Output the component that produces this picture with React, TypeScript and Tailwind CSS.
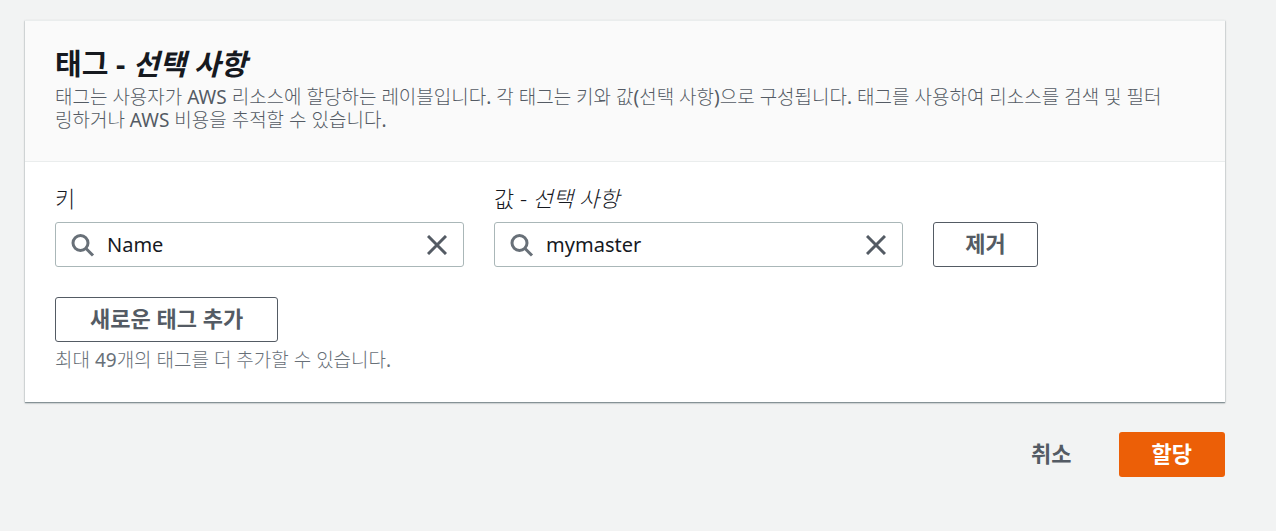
import { FC, useState } from 'react';

type TagFieldProps = {
  id: string;
  label: string;
  hint?: string;
  value: string;
  onChange: (value: string) => void;
};

const TagField: FC<TagFieldProps> = ({ id, label, hint, value, onChange }) => (
  <div className="min-w-0 flex-1">
    <label htmlFor={id} className="mb-2 block text-[22px] leading-8 font-light text-[#16191f]">
      {label}
      {hint && <> - <em>{hint}</em></>}
    </label>
    <div className="flex h-[45px] items-center rounded-[3px] border border-[#aab7b8] bg-white pr-4 pl-[15px]">
      <svg className="h-6 w-6 shrink-0" viewBox="0 0 24 24" fill="none" stroke="#687078" strokeWidth="3" aria-hidden="true">
        <circle cx="9.5" cy="10" r="7.5" />
        <path d="M14.5 15l7.5 7.5" />
      </svg>
      <input
        id={id}
        value={value}
        onChange={(e) => onChange(e.target.value)}
        className="ml-3 min-w-0 flex-1 bg-transparent text-xl text-[#16191f] outline-none"
      />
      <button type="button" onClick={() => onChange('')} aria-label="지우기" className="shrink-0">
        <svg className="h-5 w-5" viewBox="0 0 20 20" fill="none" stroke="#545b64" strokeWidth="3" aria-hidden="true">
          <path d="M1 1l18 18M19 1L1 19" />
        </svg>
      </button>
    </div>
  </div>
);

const App: FC = () => {
  const [tagKey, setTagKey] = useState('Name');
  const [tagValue, setTagValue] = useState('mymaster');

  return (
    <div className="min-h-screen bg-[#f2f3f3] py-5 pr-[51px] pl-[25px] font-['Noto_Sans','Noto_Sans_CJK_KR',sans-serif]">
      <section className="border-t border-[#eaeded] bg-white shadow-[0_1px_1px_rgba(0,28,36,0.3),0_1px_2px_rgba(0,28,36,0.3)]">
        <header className="border-b border-[#eaeded] bg-[#fafafa] px-[30px] pt-[25px] pb-[29px]">
          <h2 className="mb-1 text-[29px] leading-9 font-bold text-[#16191f]">
            태그 - <em>선택 사항</em>
          </h2>
          <p className="pr-5 font-['Noto_Sans','Noto_Sans_CJK_KR_Light','Noto_Sans_CJK_KR',sans-serif] text-[19px] leading-[23px] break-all text-[#545b64]">
            태그는 사용자가 AWS 리소스에 할당하는 레이블입니다. 각 태그는 키와 값(선택 사항)으로 구성됩니다. 태그를 사용하여 리소스를 검색 및 필터링하거나 AWS 비용을 추적할 수 있습니다.
          </p>
        </header>
        <div className="px-[30px] pt-5 pb-7">
          <div className="flex items-end gap-[30px]">
            <div className="flex w-[74.4%] gap-[30px]">
              <TagField id="tag-key" label="키" value={tagKey} onChange={setTagKey} />
              <TagField id="tag-value" label="값" hint="선택 사항" value={tagValue} onChange={setTagValue} />
            </div>
            <button type="button" className="h-[45px] rounded-[3px] border border-[#545b64] px-[31px] pb-1 text-[22px] leading-8 font-bold text-[#545b64]">제거</button>
          </div>
          <button type="button" className="mt-[30px] block h-[45px] rounded-[3px] border border-[#545b64] px-[34px] pb-1 text-[22px] leading-8 font-bold text-[#545b64]">새로운 태그 추가</button>
          <p className="mt-1 font-['Noto_Sans','Noto_Sans_CJK_KR_Light','Noto_Sans_CJK_KR',sans-serif] text-[19px] leading-7 text-[#687078]">최대 49개의 태그를 더 추가할 수 있습니다.</p>
        </div>
      </section>
      <div className="mt-[30px] flex justify-end gap-[14px]">
        <button type="button" className="h-[45px] px-[33px] pb-1 text-[22px] leading-8 font-bold text-[#545b64]">취소</button>
        <button type="button" className="h-[45px] rounded-[3px] bg-[#ec5f07] px-[33px] pb-1 text-[22px] leading-8 font-bold text-white">할당</button>
      </div>
    </div>
  );
};

export default App;
